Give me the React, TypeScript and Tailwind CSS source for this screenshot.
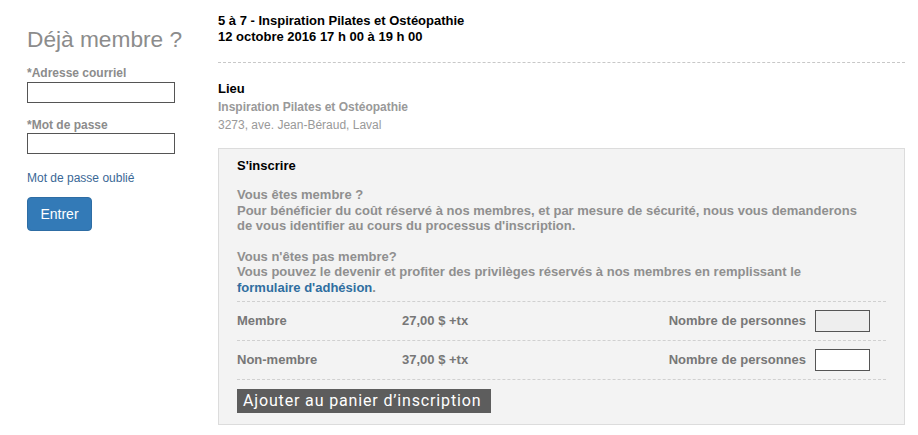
import React from "react";

const font = { fontFamily: '"Liberation Sans", Arial, sans-serif' };

function PriceRow({ label, price, disabled }: { label: string; price: string; disabled?: boolean }) {
  return (
    <div className="flex items-center h-[39px] border-b border-dashed border-[#d0d0d0] text-[13px] font-bold text-[#777]">
      <div className="w-[165px]">{label}</div>
      <div className="flex-1">{price}</div>
      <div className="mr-[9px]">Nombre de personnes</div>
      <input
        disabled={disabled}
        className={
          "mr-[16px] w-[55px] h-[22px] border border-[#555] " + (disabled ? "bg-[#eeeeee]" : "bg-white")
        }
      />
    </div>
  );
}

export default function App() {
  return (
    <div className="flex bg-white w-[918px] h-[435px] overflow-hidden" style={font}>
      {/* connexion */}
      <div className="w-[218px] pl-[27px] pt-[26px]">
        <h2 className="text-[22.7px] leading-[26px] text-[#8c8c8c]">Déjà membre ?</h2>
        <label className="block mt-[14px] text-[12px] leading-[14px] font-bold text-[#8c8c8c]">*Adresse courriel</label>
        <input className="block mt-[2px] w-[148px] h-[21px] border border-[#555] bg-white" />
        <label className="block mt-[15px] text-[12px] leading-[14px] font-bold text-[#8c8c8c]">*Mot de passe</label>
        <input className="block mt-[1px] w-[148px] h-[21px] border border-[#555] bg-white" />
        <a className="block mt-[17px] text-[12px] leading-[14px] text-[#3a6896]">Mot de passe oublié</a>
        <button className="mt-[12px] w-[65px] h-[34px] rounded-[4px] bg-[#337ab7] border border-[#2e6da4] text-white text-[14px]">
          Entrer
        </button>
      </div>

      {/* événement */}
      <div className="w-[687px] pt-[13px]">
        <div className="text-[13px] leading-[16px] font-bold text-black">
          <div>5 à 7 - Inspiration Pilates et Ostéopathie</div>
          <div>12 octobre 2016 17 h 00 à 19 h 00</div>
        </div>
        <div className="mt-[17px] border-t border-dashed border-[#c8c8c8]" />
        <div className="mt-[17px] text-[12px] leading-[18px]">
          <div className="font-bold text-[13px] text-black">Lieu</div>
          <div className="font-bold text-[#999]">Inspiration Pilates et Ostéopathie</div>
          <div className="text-[#999]">3273, ave. Jean-Béraud, Laval</div>
        </div>

        <div className="mt-[14px] h-[277px] border border-[#dcdcdc] bg-[#f3f3f3] px-[18px] pt-[9px]">
          <div className="text-[13px] leading-[15px] font-bold text-black">S'inscrire</div>
          <div className="mt-[14px] text-[13px] leading-[15.5px] font-bold text-[#8f8f8f]">
            <p>Vous êtes membre ?</p>
            <p>
              Pour bénéficier du coût réservé à nos membres, et par mesure de sécurité, nous vous demanderons
              <br />
              de vous identifier au cours du processus d'inscription.
            </p>
            <p className="mt-[15px]">Vous n'êtes pas membre?</p>
            <p>
              Vous pouvez le devenir et profiter des privilèges réservés à nos membres en remplissant le
              <br />
              <a className="text-[#2f6ea0]">formulaire d'adhésion</a>.
            </p>
          </div>
          <div className="mt-[6px] border-t border-dashed border-[#d0d0d0]">
            <PriceRow label="Membre" price="27,00 $ +tx" disabled />
            <PriceRow label="Non-membre" price="37,00 $ +tx" />
          </div>
          <button
            className="mt-[9px] h-[24px] pl-[6px] pr-[10px] bg-[#5d5d5d] text-white text-[16px] leading-[24px] tracking-[0.85px]"
            style={{ fontFamily: '"Roboto", "Liberation Sans", sans-serif' }}
          >
            Ajouter au panier d’inscription
          </button>
        </div>
      </div>
    </div>
  );
}
